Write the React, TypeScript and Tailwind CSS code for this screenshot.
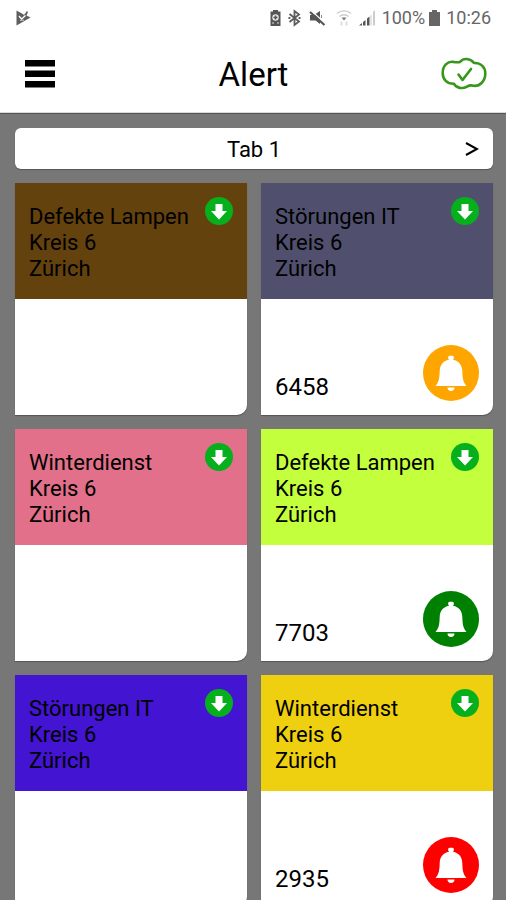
// Alert overview: status bar, title bar and a two-column grid of alert tiles

interface AlertTile {
  id: number;
  title: string;
  area: string;
  city: string;
  color: string;
  count?: number;
  bell?: string;
}

const TILES: AlertTile[] = [
  { id: 1, title: 'Defekte Lampen', area: 'Kreis 6', city: 'Zürich', color: 'bg-[#64420e]' },
  { id: 2, title: 'Störungen IT', area: 'Kreis 6', city: 'Zürich', color: 'bg-[#50506e]', count: 6458, bell: 'bg-[#ffa500]' },
  { id: 3, title: 'Winterdienst', area: 'Kreis 6', city: 'Zürich', color: 'bg-[#e2708a]' },
  { id: 4, title: 'Defekte Lampen', area: 'Kreis 6', city: 'Zürich', color: 'bg-[#c4ff3e]', count: 7703, bell: 'bg-[#008000]' },
  { id: 5, title: 'Störungen IT', area: 'Kreis 6', city: 'Zürich', color: 'bg-[#4314d2]' },
  { id: 6, title: 'Winterdienst', area: 'Kreis 6', city: 'Zürich', color: 'bg-[#eed010]', count: 2935, bell: 'bg-[#ff0000]' },
];

function StatusBar() {
  return (
    <div className="flex h-9 shrink-0 items-center justify-between pr-[15px] pl-4 text-lg text-[#666]">
      <svg width="15" height="16" viewBox="0 0 15 16" fill="#5f5f5f" aria-hidden="true">
        <path d="M0.5 0.5L6 3.5L8 5L11 1L12 2L10.5 5.5L14.5 7.5L0.5 15.5Z" />
        <path d="M3 6L5.5 9L9.5 5.5" fill="none" stroke="#fff" strokeWidth="1.3" />
        <path d="M4 10.5L8 10" fill="none" stroke="#ccc" strokeWidth="1" />
      </svg>
      <div className="flex items-center">
        {/* Battery saver */}
        <svg className="mr-1.5" width="13" height="18" viewBox="0 0 13 18" aria-hidden="true">
          <path d="M4 1H9V2.5H11.5V17H1.5V2.5H4Z" fill="#555" />
          <circle cx="6.5" cy="8.5" r="3.2" fill="#eee" />
          <path d="M6.5 6.5V10.5M4.5 8.5H8.5" stroke="#555" strokeWidth="1.6" />
          <path d="M3 14H5M8 14H10" stroke="#ddd" strokeWidth="1.2" />
        </svg>
        {/* Bluetooth */}
        <svg className="mr-2" width="13" height="18" viewBox="0 0 13 18" fill="none" stroke="#5c5c5c" strokeWidth="1.8" aria-hidden="true">
          <path d="M1.5 5L11 12.5L6.5 16V2L11 5.5L1.5 13" />
          <path d="M0.5 9H2.4M10.6 9H12.5" />
        </svg>
        {/* Muted speaker */}
        <svg className="mr-2.5" width="17" height="18" viewBox="0 0 17 18" aria-hidden="true">
          <path d="M1 6H5L11 2V15L6.5 11.5H1Z" fill="#555" />
          <path d="M2 1.5L16.5 14.5" stroke="#fff" strokeWidth="1.2" />
          <path d="M1 3L15.5 16" stroke="#555" strokeWidth="2.2" />
          <path d="M12.5 6V9" stroke="#888" strokeWidth="1" />
        </svg>
        {/* Wi-Fi */}
        <svg className="mr-1.5" width="16" height="18" viewBox="0 0 16 18" fill="none" strokeWidth="1.4" aria-hidden="true">
          <path d="M1 4.5C5 1 11 1 15 4.5" stroke="#ccc" />
          <path d="M3.5 7.5C6 5.2 10 5.2 12.5 7.5" stroke="#ccc" />
          <path d="M5.5 8.5H10.5L8 11.5Z" fill="#777" />
          <path d="M5.5 12.5V16.5M10.5 12.5V16.5" stroke="#ddd" strokeWidth="2" />
        </svg>
        {/* Signal strength */}
        <svg className="mr-1.5" width="18" height="18" viewBox="0 0 18 18" aria-hidden="true">
          <path d="M1 16.5L4 14V16.5ZM5 13L7.5 11V16.5H5ZM9 9.5L11.5 7.5V16.5H9Z" fill="#555" />
          <path d="M12.5 6.5L13.5 5.5V16.5H12.5ZM15 3L17 1V16.5H15Z" fill="#ccc" />
        </svg>
        <span>100%</span>
        <svg className="mr-1.5 ml-1" width="11" height="18" viewBox="0 0 11 18" fill="#666" aria-hidden="true">
          <path d="M3 1H8V3H11V17H0V3H3Z" />
        </svg>
        <span>10:26</span>
      </div>
    </div>
  );
}

function Header() {
  return (
    <header className="grid h-[77px] shrink-0 grid-cols-[1fr_auto_1fr] items-center border-b border-[#d8d8d8] pr-[19px] pl-5">
      <button type="button" aria-label="Menu" className="justify-self-start px-1">
        <svg width="32" height="30" viewBox="0 0 32 30" aria-hidden="true">
          <path d="M1 1H31V7.5H1ZM1 11.5H31V18H1ZM1 22H31V28.5H1Z" />
        </svg>
      </button>
      <h1 className="pt-0.5 text-[33px] leading-10">Alert</h1>
      <button type="button" aria-label="Connection status" className="justify-self-end">
        <svg width="46" height="34" viewBox="0 0 46 34" fill="none" stroke="#36981a" strokeWidth="2.6" strokeLinecap="round" strokeLinejoin="round" aria-hidden="true">
          <path d="M19 4.9C22.5 0.8 29 1 33 6C39.5 5.6 44.3 10 44.3 16.5C44.3 24 39 29.5 32.5 28.8C30 28 28 28.4 26 29.6C21.5 32.2 15.5 31.3 13 26.8C6 27 1.7 22.5 1.7 16C1.7 8.5 6.5 4 12.5 4.9C15 5.4 17 5.6 19 4.9Z" />
          <path d="M17.5 17.5L21.5 23L30 12" />
        </svg>
      </button>
    </header>
  );
}

function DownloadIcon() {
  return (
    <svg width="28" height="28" viewBox="0 0 28 28" aria-hidden="true">
      <circle cx="14" cy="14" r="14" fill="#06b01c" />
      <path d="M10.5 7H17.5V14H22L14 22.5L6 14H10.5Z" fill="#fff" />
    </svg>
  );
}

function BellIcon() {
  return (
    <svg width="56" height="56" viewBox="0 0 56 56" fill="#fff" aria-hidden="true">
      <path d="M25.2 11.5L26.5 10.8H29.5L30.8 11.5V13.5L30 14.8C36 16 39 20 39.3 26C39.5 33 40 37 43.5 41H12.5C16 37 16.5 33 16.7 26C17 20 20 16 26 14.8L25.2 13.5Z" />
      <path d="M24.5 42.5H31.5C31.5 44.8 30.2 46 28 46C25.8 46 24.5 44.8 24.5 42.5Z" />
    </svg>
  );
}

function Tile({ tile }: { tile: AlertTile }) {
  return (
    <article className="flex aspect-square flex-col rounded-br-[10px] bg-white shadow-[0_1px_1px_#555]">
      <div className={`flex flex-1 items-start justify-between px-[14px] pt-[14px] ${tile.color}`}>
        <h2 className="pt-[7px] text-[22px] leading-[26px] whitespace-nowrap">
          {tile.title}
          <br />
          {tile.area}
          <br />
          {tile.city}
        </h2>
        <button type="button" aria-label={`Download ${tile.title}`}>
          <DownloadIcon />
        </button>
      </div>
      <div className="flex flex-1 items-end justify-between px-[14px] pb-[14px]">
        {tile.count !== undefined && <span className="text-2xl leading-[28px]">{tile.count}</span>}
        {tile.bell && (
          <button type="button" aria-label={`Alerts for ${tile.title}`} className={`rounded-full ${tile.bell}`}>
            <BellIcon />
          </button>
        )}
      </div>
    </article>
  );
}

export default function App() {
  return (
    <div className="flex h-screen flex-col bg-white font-[Roboto,sans-serif] text-black">
      <StatusBar />
      <Header />
      <main className="flex-1 overflow-y-auto border-t border-[#555] bg-[#777] py-[14px] pr-[13px] pl-[15px] [scrollbar-width:none]">
        <button
          type="button"
          className="grid h-[41px] w-full grid-cols-[1fr_auto_1fr] items-center rounded-md bg-white px-[14px] text-[22px] shadow-[0_1px_1px_#555]"
        >
          <span className="col-start-2 pt-0.5">Tab 1</span>
          <svg className="justify-self-end" width="14" height="16" viewBox="0 0 14 16" fill="none" stroke="#000" strokeWidth="2" aria-hidden="true">
            <path d="M1 2L12 8L1 14" />
          </svg>
        </button>
        <div className="mt-[14px] grid grid-cols-2 gap-[14px]">
          {TILES.map((tile) => (
            <Tile key={tile.id} tile={tile} />
          ))}
        </div>
      </main>
    </div>
  );
}
